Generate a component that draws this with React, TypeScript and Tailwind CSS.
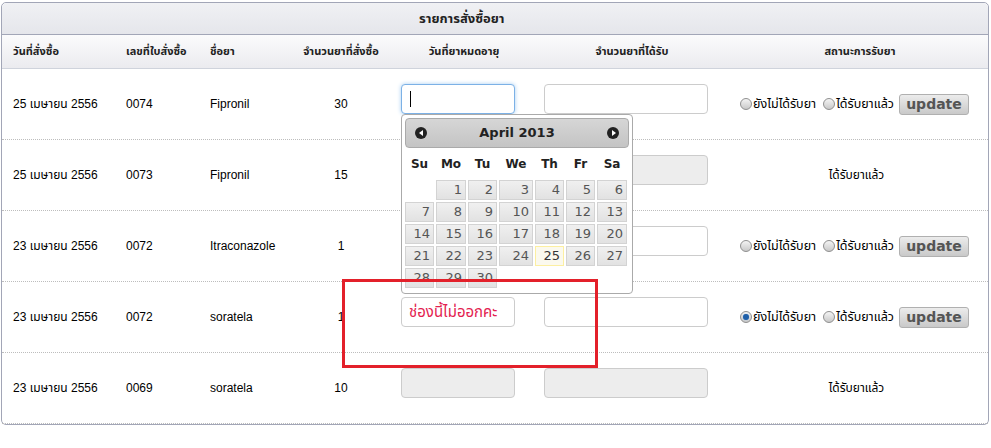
import React from "react";

type Order = {
  date: string;
  no: string;
  drug: string;
  qty: string;
  received: boolean;
  checked?: boolean;
  expiry?: string;
};

const orders: Order[] = [
  { date: "25 เมษายน 2556", no: "0074", drug: "Fipronil", qty: "30", received: false },
  { date: "25 เมษายน 2556", no: "0073", drug: "Fipronil", qty: "15", received: true },
  { date: "23 เมษายน 2556", no: "0072", drug: "Itraconazole", qty: "1", received: false },
  { date: "23 เมษายน 2556", no: "0072", drug: "soratela", qty: "1", received: false, checked: true, expiry: "ช่องนี้ไม่ออกคะ" },
  { date: "23 เมษายน 2556", no: "0069", drug: "soratela", qty: "10", received: true },
];

const cols = "grid grid-cols-[112px_84px_88px_110px_136px_200px_1fr]";
const font = { fontFamily: '"Liberation Sans", Tahoma, "Noto Sans Thai", sans-serif' };

function Radio({ checked }: { checked?: boolean }) {
  return (
    <span className="inline-flex w-[12px] h-[12px] rounded-full border border-[#8f8f8f] bg-gradient-to-b from-[#f4f4f4] to-[#c9c9c9] items-center justify-center">
      {checked && <span className="w-[6px] h-[6px] rounded-full bg-[#1f5fa8] shadow-[0_0_1px_#7fb3ea]" />}
    </span>
  );
}

function Calendar() {
  const days = ["Su", "Mo", "Tu", "We", "Th", "Fr", "Sa"];
  const cells: (number | null)[] = [null];
  for (let d = 1; d <= 30; d++) cells.push(d);
  const grid = "grid grid-cols-[29px_30px_29px_34px_29px_29px_30px] gap-[2px]";
  return (
    <div
      className="absolute left-0 top-[30px] w-[232px] h-[180px] bg-white border border-[#aaaaaa] rounded-[4px] p-[3px] z-10 overflow-hidden"
      style={{ fontFamily: '"DejaVu Sans", Verdana, sans-serif' }}
    >
      <div className="h-[30px] border border-[#aaaaaa] rounded-[4px] bg-gradient-to-b from-[#d6d6d6] to-[#c4c4c4] flex items-center justify-between px-[9px]">
        <span className="w-[12px] h-[12px] rounded-full bg-[#222] flex items-center justify-center">
          <span className="w-0 h-0 border-y-[3px] border-y-transparent border-r-[4px] border-r-white mr-[1px]" />
        </span>
        <span className="text-[13px] font-bold text-[#222]">April 2013</span>
        <span className="w-[12px] h-[12px] rounded-full bg-[#222] flex items-center justify-center">
          <span className="w-0 h-0 border-y-[3px] border-y-transparent border-l-[4px] border-l-white ml-[1px]" />
        </span>
      </div>
      <div className={`${grid} mt-[7px] h-[18px] items-center`}>
        {days.map((d) => (
          <div key={d} className="text-center text-[12px] font-bold text-[#222]">
            {d}
          </div>
        ))}
      </div>
      <div className={`${grid} mt-[7px]`}>
        {cells.map((d, i) =>
          d === null ? (
            <div key={i} />
          ) : (
            <div
              key={i}
              className={
                d === 25
                  ? "h-[20px] border border-[#fcefa1] bg-[#fbf9ee] text-[#363636] text-right pr-[3px] text-[13px] leading-[18px]"
                  : "h-[20px] border border-[#d3d3d3] bg-gradient-to-b from-[#f0f0f0] to-[#e2e2e2] text-[#555] text-right pr-[3px] text-[13px] leading-[18px]"
              }
            >
              {d}
            </div>
          )
        )}
      </div>
    </div>
  );
}

export default function App() {
  return (
    <div className="w-[991px] h-[448px] bg-white pt-[2px] pl-[1px] text-[12px] text-black" style={font}>
      <div className="w-[988px] border border-[#a2a6b7] rounded-[5px]">
        {/* title */}
        <div className="h-[32px] bg-gradient-to-b from-[#f0f1f4] to-[#e5e6eb] border-b border-[#a2a6b7] rounded-t-[5px] flex items-center pl-[417px]">
          <span className="text-[13px] font-bold text-[#222]">รายการสั่งซื้อยา</span>
        </div>
        {/* header */}
        <div className={`${cols} h-[34px] items-center bg-gradient-to-b from-[#fbfbfc] to-[#ebebef] border-b border-[#cfd3dc] font-bold text-[11px] text-[#222]`}>
          <div className="pl-[11px]">วันที่สั่งซื้อ</div>
          <div className="pl-[12px]">เลขที่ใบสั่งซื้อ</div>
          <div className="pl-[12px]">ชื่อยา</div>
          <div className="text-center">จำนวนยาที่สั่งซื้อ</div>
          <div className="text-center">วันที่ยาหมดอายุ</div>
          <div className="text-center">จำนวนยาที่ได้รับ</div>
          <div className="text-center">สถานะการรับยา</div>
        </div>
        {/* rows */}
        {orders.map((o, i) => (
          <div key={i} className={`${cols} h-[71px] items-center border-b border-dotted border-[#bdbdbd]`}>
            <div className="pl-[11px]">{o.date}</div>
            <div className="pl-[12px]">{o.no}</div>
            <div className="pl-[12px]">{o.drug}</div>
            <div className="text-center">{o.qty}</div>
            <div className="pl-[5px] self-start pt-[15px]">
              {i === 0 ? (
                <div className="relative">
                  <div className="w-[114px] h-[30px] rounded-[4px] border border-[#7cb1e6] bg-white shadow-[0_0_4px_#a8cff3] flex items-center pl-[8px]">
                    <span className="w-[1px] h-[16px] bg-black" />
                  </div>
                  <Calendar />
                </div>
              ) : (
                <div
                  className={`w-[114px] h-[30px] rounded-[4px] border border-[#cccccc] flex items-center pl-[7px] text-[15px] text-[#e3214f] ${o.received ? "bg-[#ededed]" : "bg-white"}`}
                >
                  {o.expiry}
                </div>
              )}
            </div>
            <div className="pl-[12px] self-start pt-[15px]">
              <div className={`w-[164px] h-[30px] rounded-[4px] border border-[#cccccc] ${o.received ? "bg-[#ededed]" : "bg-white"}`} />
            </div>
            <div className="flex items-center justify-center pr-[11px]">
              {o.received ? (
                <span className="pl-[4px]">ได้รับยาแล้ว</span>
              ) : (
                <>
                  <Radio checked={o.checked} />
                  <span className="ml-[1px] mr-[7px] text-[12.5px]">ยังไม่ได้รับยา</span>
                  <Radio />
                  <span className="ml-[1px] mr-[5px] text-[12.5px]">ได้รับยาแล้ว</span>
                  <button className="w-[70px] h-[21px] rounded-[3px] border border-[#b0b0b0] bg-gradient-to-b from-[#ececec] to-[#c9c9c9] text-[14px] font-bold text-[#555] leading-none" style={{ fontFamily: '"DejaVu Sans", Verdana, sans-serif' }}>
                    update
                  </button>
                </>
              )}
            </div>
          </div>
        ))}
      </div>
      {/* highlight box */}
      <div className="absolute left-[342px] top-[279px] w-[256px] h-[89px] border-[3px] border-[#e3202a] z-20" />
    </div>
  );
}
